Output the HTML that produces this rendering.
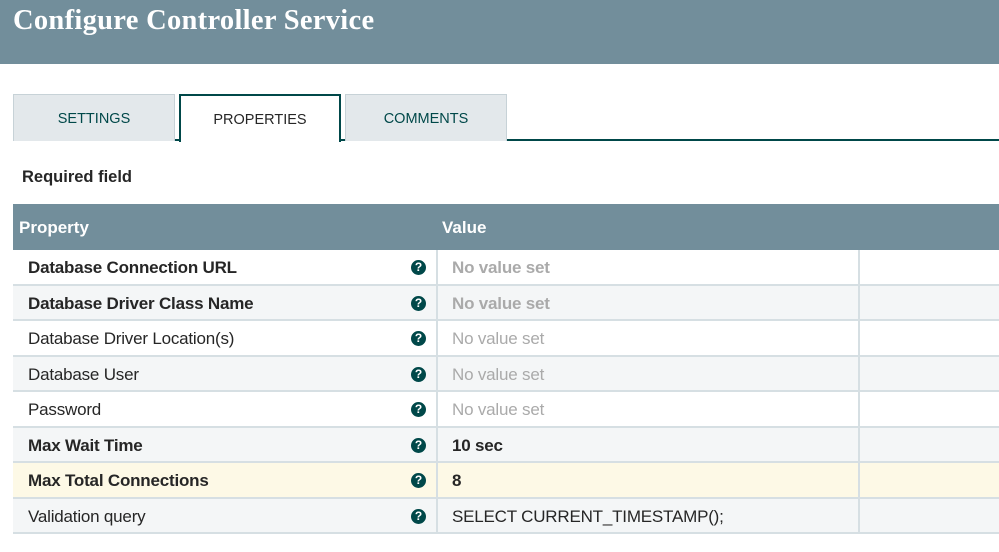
<!DOCTYPE html>
<html><head><style>
*{margin:0;padding:0;box-sizing:border-box}
body{width:999px;height:552px;overflow:hidden;background:#fff;font-family:"Liberation Sans",sans-serif;position:relative}
.hd{position:absolute;left:0;top:0;width:999px;height:64px;background:#728e9b}
.hd h1{position:absolute;left:13px;top:5px;color:#fff;font:bold 28.5px "Liberation Serif",serif;letter-spacing:0.3px}
.tab{position:absolute;top:94px;height:47px;width:162px;background:#e3e8eb;border:1px solid #c7d2d7;border-bottom:none;color:#004849;font-size:14.5px;text-align:center;line-height:49px}
.tab.act{background:#fff;border:2px solid #004849;border-bottom:none;color:#262626;height:48px}
.line{position:absolute;left:13px;top:139px;width:986px;height:2px;background:#004849}
.req{position:absolute;left:22px;top:168px;font-weight:bold;font-size:16.5px;color:#262626}
.th{position:absolute;left:13px;top:204px;width:986px;height:47px;background:#728e9b;color:#fff;font-weight:bold;font-size:17px}
.th span{position:absolute;top:14px}
.row{position:absolute;left:13px;width:986px;height:35.5px;border-bottom:2px solid #d6dfe3;font-size:17px;color:#262626;letter-spacing:-0.2px}
.row .n{position:absolute;left:15px;top:8px}
.row .v{position:absolute;left:439px;top:8px}
.row .d1{position:absolute;left:423px;top:0;bottom:0;width:2px;background:#d6dfe3}
.row .d2{position:absolute;left:845px;top:0;bottom:0;width:2px;background:#d6dfe3}
.row .q{position:absolute;left:398px;top:10px;width:15px;height:15px;border-radius:50%;background:#004849;color:#fff;font-size:12px;font-weight:bold;text-align:center;line-height:15px;letter-spacing:0}
.b{font-weight:bold}
.g{color:#aaa}
</style></head><body>
<div class="hd"><h1>Configure Controller Service</h1></div>
<div class="line"></div>
<div class="tab" style="left:13px">SETTINGS</div>
<div class="tab act" style="left:179px">PROPERTIES</div>
<div class="tab" style="left:345px">COMMENTS</div>
<div class="req">Required field</div>
<div class="th"><span style="left:6px">Property</span><span style="left:429px">Value</span></div>

<div class="row" style="top:250px;background:#fff"><span class="n b">Database Connection URL</span><span class="q">?</span><span class="d1"></span><span class="v b g">No value set</span><span class="d2"></span></div>
<div class="row" style="top:285.5px;background:#f4f6f7"><span class="n b">Database Driver Class Name</span><span class="q">?</span><span class="d1"></span><span class="v b g">No value set</span><span class="d2"></span></div>
<div class="row" style="top:321px;background:#fff"><span class="n">Database Driver Location(s)</span><span class="q">?</span><span class="d1"></span><span class="v g">No value set</span><span class="d2"></span></div>
<div class="row" style="top:356.5px;background:#f4f6f7"><span class="n">Database User</span><span class="q">?</span><span class="d1"></span><span class="v g">No value set</span><span class="d2"></span></div>
<div class="row" style="top:392px;background:#fff"><span class="n">Password</span><span class="q">?</span><span class="d1"></span><span class="v g">No value set</span><span class="d2"></span></div>
<div class="row" style="top:427.5px;background:#f4f6f7"><span class="n b">Max Wait Time</span><span class="q">?</span><span class="d1"></span><span class="v b">10 sec</span><span class="d2"></span></div>
<div class="row" style="top:463px;background:#fdf9e6"><span class="n b">Max Total Connections</span><span class="q">?</span><span class="d1"></span><span class="v b">8</span><span class="d2"></span></div>
<div class="row" style="top:498.5px;background:#f4f6f7"><span class="n">Validation query</span><span class="q">?</span><span class="d1"></span><span class="v">SELECT CURRENT_TIMESTAMP();</span><span class="d2"></span></div>
</body></html>
